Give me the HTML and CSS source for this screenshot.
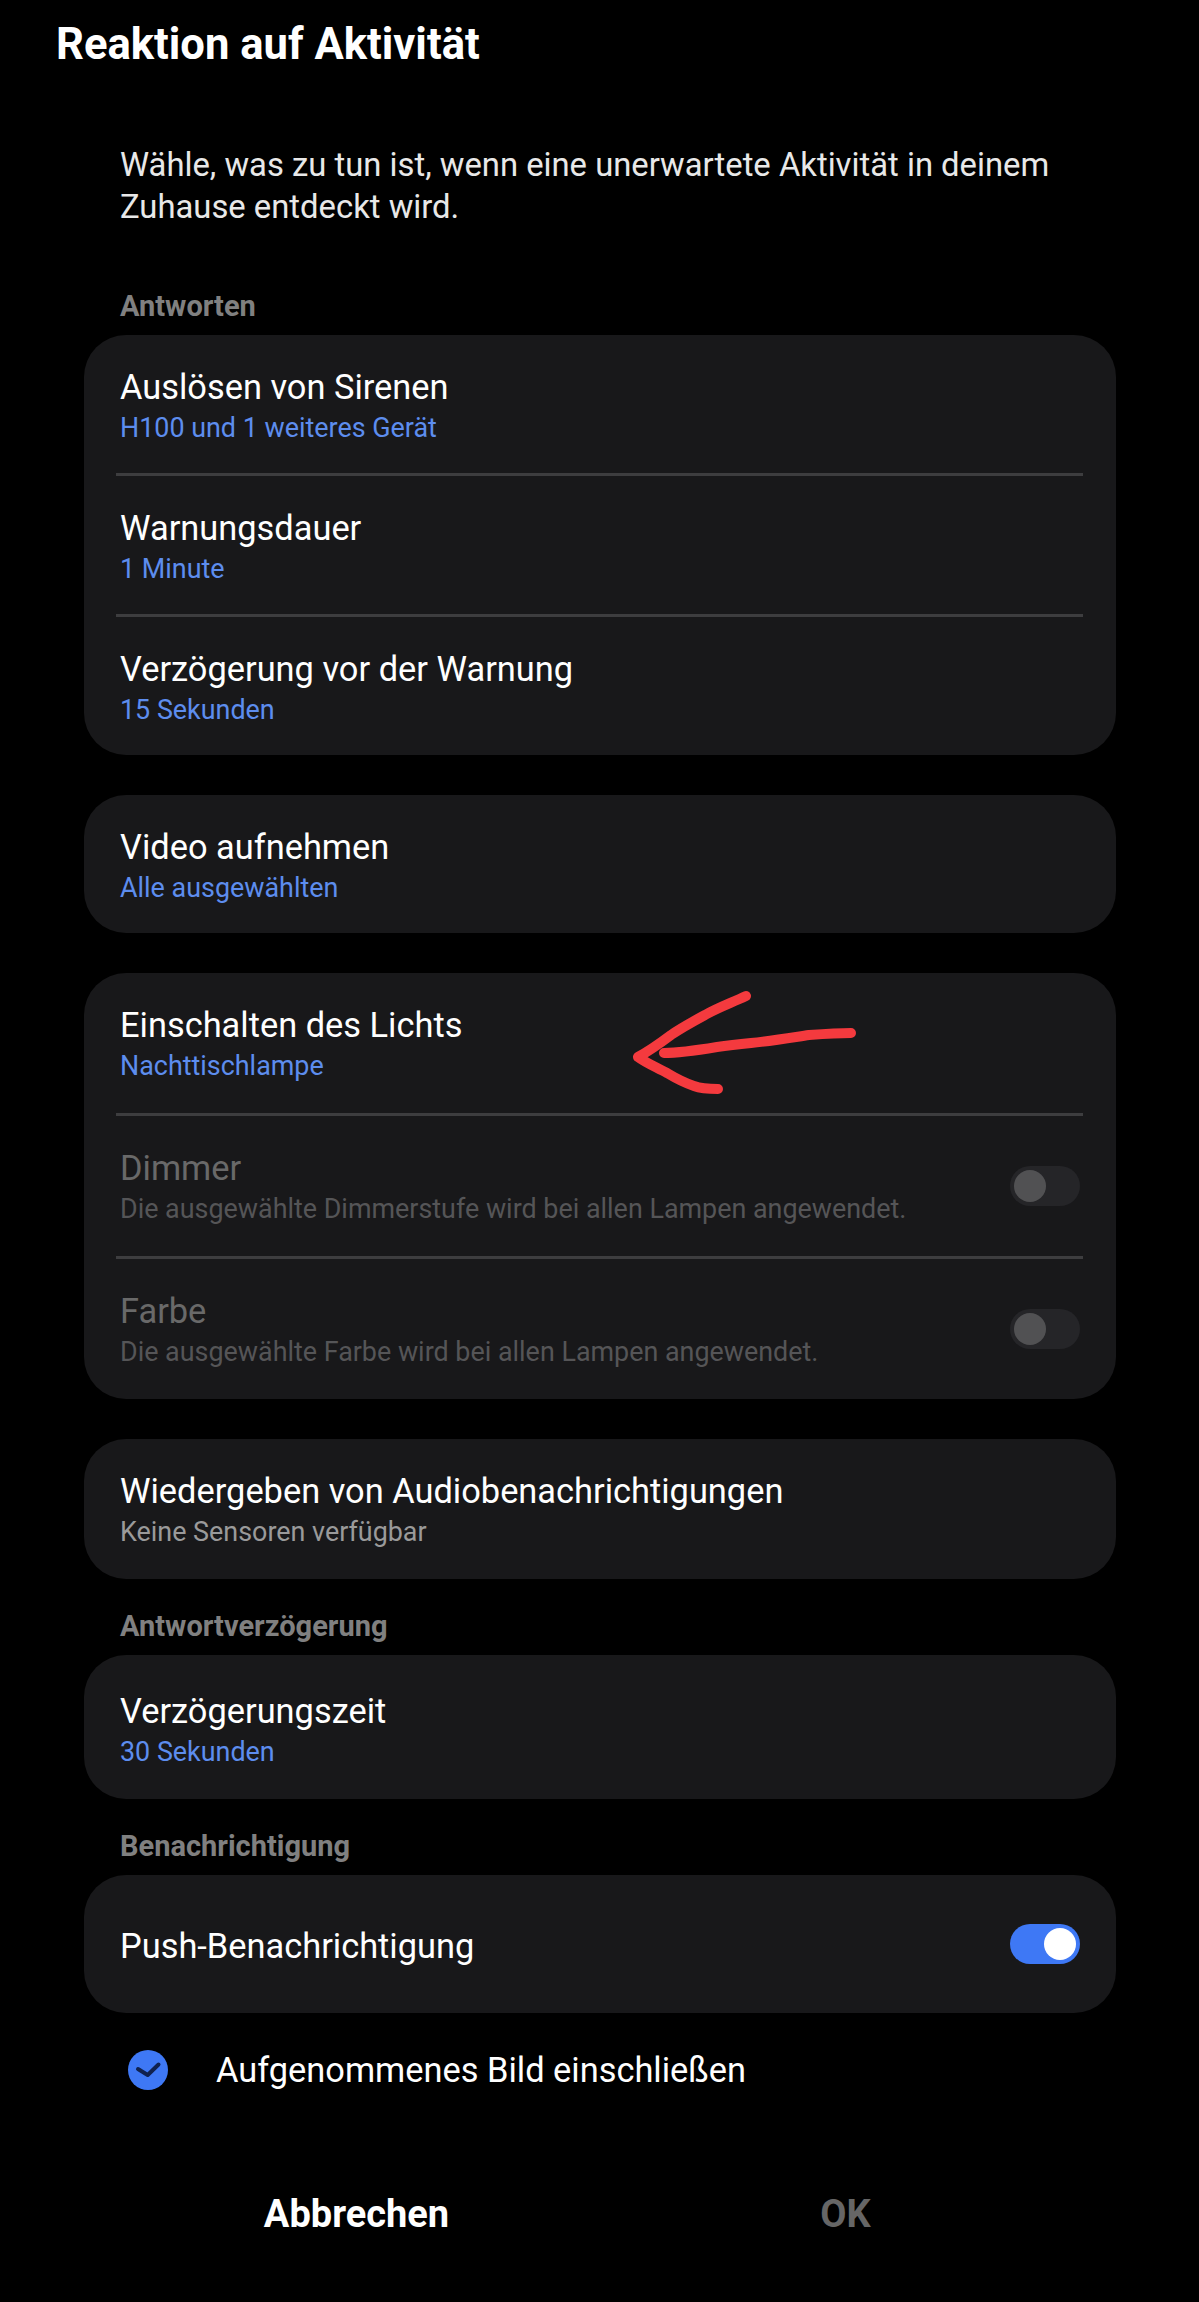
FILE: index.html
```html
<!DOCTYPE html>
<html lang="de">
<head>
    <meta charset="UTF-8">
    <meta name="viewport" content="width=device-width, initial-scale=1.0">
    <title>Reaktion auf Aktivität</title>
    <link rel="stylesheet" href="styles.css">
</head>
<body>
    <h1 class="page-title">Reaktion auf Aktivität</h1>

    <div class="content">
        <p class="intro">Wähle, was zu tun ist, wenn eine unerwartete Aktivität in deinem Zuhause entdeckt wird.</p>

        <div class="section-label">Antworten</div>
        <div class="card">
            <div class="row">
                <div class="row-title">Auslösen von Sirenen</div>
                <div class="row-sub">H100 und 1 weiteres Gerät</div>
            </div>
            <div class="divider"></div>
            <div class="row">
                <div class="row-title">Warnungsdauer</div>
                <div class="row-sub">1 Minute</div>
            </div>
            <div class="divider"></div>
            <div class="row">
                <div class="row-title">Verzögerung vor der Warnung</div>
                <div class="row-sub">15 Sekunden</div>
            </div>
        </div>

        <div class="card card-gap">
            <div class="row">
                <div class="row-title">Video aufnehmen</div>
                <div class="row-sub">Alle ausgewählten</div>
            </div>
        </div>

        <div class="card card-gap light-card">
            <div class="row row-tall">
                <div class="row-title">Einschalten des Lichts</div>
                <div class="row-sub">Nachttischlampe</div>
            </div>
            <div class="divider"></div>
            <div class="row row-tall row-switch disabled">
                <div>
                    <div class="row-title">Dimmer</div>
                    <div class="row-sub">Die ausgewählte Dimmerstufe wird bei allen Lampen angewendet.</div>
                </div>
                <span class="switch"></span>
            </div>
            <div class="divider"></div>
            <div class="row row-tall row-switch disabled">
                <div>
                    <div class="row-title">Farbe</div>
                    <div class="row-sub">Die ausgewählte Farbe wird bei allen Lampen angewendet.</div>
                </div>
                <span class="switch"></span>
            </div>
            <svg class="scribble" viewBox="0 0 270 130" width="270" height="130">
                <path d="M147 23C132 30 118 35 106 42C93 49 82 55 72 62C60 71 50 78 39 84C47 90 57 94 68 100C78 106 86 110 95 113C103 116 110 116 119 116" />
                <path d="M65 80C82 80 100 77 118 74C132 72 142 71 152 70C172 68 190 65 210 62C224 61 238 60 252 60" />
            </svg>
        </div>

        <div class="card card-gap">
            <div class="row row-tall">
                <div class="row-title">Wiedergeben von Audiobenachrichtigungen</div>
                <div class="row-sub row-sub-gray">Keine Sensoren verfügbar</div>
            </div>
        </div>

        <div class="section-label section-gap">Antwortverzögerung</div>
        <div class="card">
            <div class="row row-delay">
                <div class="row-title">Verzögerungszeit</div>
                <div class="row-sub">30 Sekunden</div>
            </div>
        </div>

        <div class="section-label section-gap">Benachrichtigung</div>
        <div class="card">
            <div class="row row-switch row-single">
                <div class="row-title push-title">Push-Benachrichtigung</div>
                <span class="switch on"></span>
            </div>
        </div>

        <div class="check-row">
            <svg class="check" viewBox="0 0 40 40" width="40" height="40">
                <circle cx="20" cy="20" r="20" fill="#3e78f5" />
                <path d="M10 19l9.700 6L30.500 14.500" fill="none" stroke="#10224f" stroke-width="4" stroke-linecap="round" stroke-linejoin="round" />
            </svg>
            <span class="check-label">Aufgenommenes Bild einschließen</span>
        </div>
    </div>

    <div class="actions">
        <button class="action">Abbrechen</button>
        <button class="action action-off">OK</button>
    </div>
</body>
</html>
```

FILE: styles.css
```css
body {
    margin: 0;
    height: 2302px;
    overflow: hidden;
    background: #000;
    color: #fff;
    font-family: 'Roboto', sans-serif;
}
.page-title {
    margin: 21px 0 0 56px;
    font-size: 43.6px;
    line-height: 48px;
    font-weight: 700;
}
.content {
    margin: 0 83px 0 84px;
}
.intro {
    margin: 75px 36px 0;
    font-size: 32.8px;
    line-height: 42px;
    color: #e8e8e8;
}
.section-label {
    margin: 61px 0 12px 36px;
    font-size: 29px;
    line-height: 34px;
    font-weight: 700;
    color: #808080;
}
.section-gap {
    margin-top: 30px;
}
.card {
    background: #18181a;
    border-radius: 42px;
}
.card-gap {
    margin-top: 40px;
}
.light-card {
    position: relative;
}
.row {
    height: 138px;
    box-sizing: border-box;
    padding: 30px 36px 0;
}
.row-tall {
    height: 140px;
}
.row-delay {
    height: 144px;
    padding-top: 34px;
}
.row-switch {
    display: flex;
    align-items: center;
    justify-content: space-between;
    padding-top: 0;
}
.row-single {
    height: 138px;
}
.row-title {
    font-size: 34.4px;
    line-height: 44px;
}
.push-title {
    padding-top: 3px;
}
.row-sub {
    padding-top: 1px;
    font-size: 26.9px;
    line-height: 36px;
    color: #5d8dee;
}
.row-sub-gray {
    color: #9a9a9a;
}
.disabled .row-title {
    color: #696969;
}
.disabled .row-sub {
    color: #555557;
}
.divider {
    height: 3px;
    margin: 0 33px 0 32px;
    background: #3d3d3f;
}
.switch {
    flex: none;
    display: flex;
    align-items: center;
    width: 70px;
    height: 40px;
    padding: 0 4px;
    box-sizing: border-box;
    border-radius: 20px;
    background: #252528;
}
.switch::before {
    content: "";
    width: 32px;
    height: 32px;
    border-radius: 50%;
    background: #515153;
}
.switch.on {
    justify-content: flex-end;
    background: #3e78f5;
}
.switch.on::before {
    background: #fff;
}
.scribble {
    position: absolute;
    left: 515px;
    top: 0;
    fill: none;
    stroke: #f43a3e;
    stroke-width: 10;
    stroke-linecap: round;
    stroke-linejoin: round;
}
.check-row {
    display: flex;
    align-items: center;
    gap: 48px;
    margin: 37px 0 0 44px;
}
.check {
    flex: none;
}
.check-label {
    font-size: 34.4px;
    line-height: 40px;
}
.actions {
    display: grid;
    grid-template-columns: 489px 489px;
    margin: 100px 0 0 112px;
}
.action {
    padding: 0;
    border: none;
    background: none;
    color: #fff;
    font-family: inherit;
    font-size: 38px;
    line-height: 48px;
    font-weight: 700;
}
.action-off {
    color: #666;
}
```
